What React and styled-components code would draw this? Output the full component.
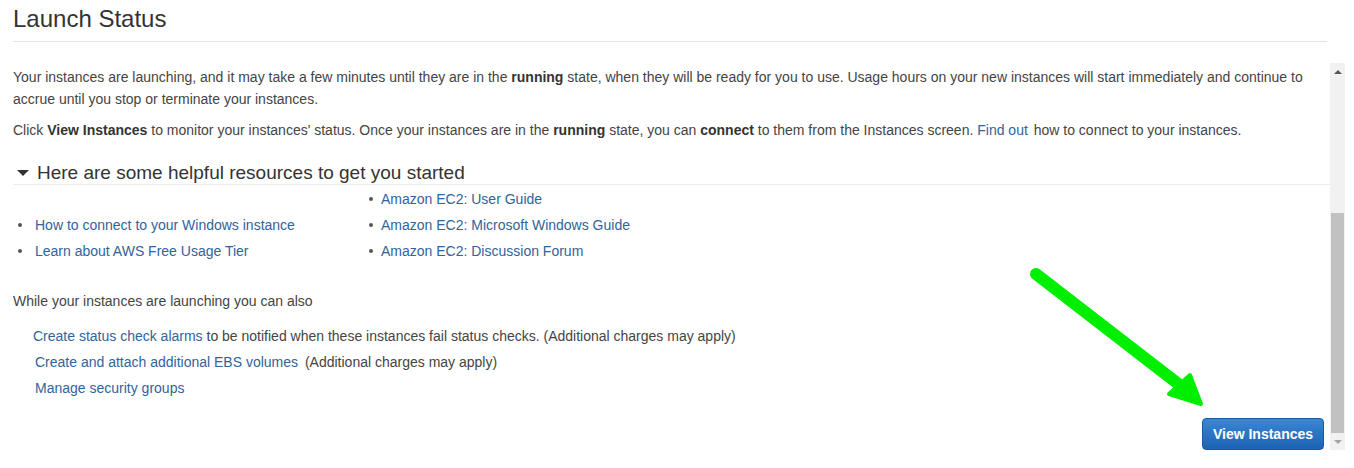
import React from "react";
import styled, { createGlobalStyle } from "styled-components";

const Global = createGlobalStyle`
  html, body { margin: 0; padding: 0; background: #fff; }
  body { font-family: "Liberation Sans", Arial, sans-serif; color: #444; }
`;

const Page = styled.div`
  position: relative;
  width: 1354px;
  height: 468px;
  padding-left: 13px;
  box-sizing: border-box;
  overflow: hidden;
`;

const Title = styled.h1`
  margin: 0 27px 0 0;
  padding: 4px 0 7px;
  font-size: 24px;
  line-height: 30px;
  font-weight: normal;
  color: #333;
  border-bottom: 1px solid #e4e4e4;
`;

const Body = styled.div`
  display: flex;
  margin: 21px 9px 0 0;
`;

const Content = styled.div`
  flex: 1;
  padding-top: 3px;
  font-size: 14px;
  line-height: 22px;
`;

const Para = styled.p`
  margin: 0 16px ${(p) => p.$mb || 0}px 0;
  b { color: #333; font-weight: bold; }
`;

const Link = styled.a`
  color: #30649c;
  text-decoration: none;
  margin-right: ${(p) => p.$mr || 0}px;
  cursor: pointer;
`;

const SectionHead = styled.h2`
  display: flex;
  align-items: center;
  gap: 8px;
  margin: 20px 0 0;
  padding-left: 4px;
  font-size: 19px;
  line-height: 23px;
  font-weight: normal;
  color: #333;
  border-bottom: 1px solid #ececec;
`;

const Caret = styled.span`
  width: 0;
  height: 0;
  border-left: 6px solid transparent;
  border-right: 6px solid transparent;
  border-top: 6px solid #333;
  margin-top: 1px;
`;

const Columns = styled.div`
  display: grid;
  grid-template-columns: 351px auto;
  align-items: end;
  margin-top: 1px;
`;

const List = styled.ul`
  list-style: none;
  margin: 0;
  padding: 0;
`;

const Item = styled.li`
  display: flex;
  align-items: center;
  line-height: 26px;
  padding-left: ${(p) => p.$indent}px;
  gap: ${(p) => p.$gap}px;
  &::before {
    content: "";
    width: 4px;
    height: 4px;
    border-radius: 50%;
    background: #555;
  }
`;

const Also = styled.p`
  margin: 26px 0 11px;
`;

const Actions = styled.div`
  display: flex;
  flex-direction: column;
`;

const ActionRow = styled.div`
  line-height: 26px;
  padding-left: ${(p) => p.$indent}px;
`;

const Footer = styled.div`
  display: flex;
  justify-content: flex-end;
  margin-top: 17px;
  padding-right: 6px;
`;

const Button = styled.button`
  width: 122px;
  height: 32px;
  border: 1px solid #1a5a9e;
  border-radius: 4px;
  background: linear-gradient(#3a86d6, #1d62b2);
  color: #fff;
  font-family: "Liberation Sans", Arial, sans-serif;
  font-size: 14px;
  font-weight: bold;
  cursor: pointer;
  padding: 0;
`;

const Scrollbar = styled.div`
  width: 15px;
  height: 387px;
  background: #f1f1f1;
  display: flex;
  flex-direction: column;
  align-items: center;
  box-sizing: border-box;
`;

const Arrow = styled.div`
  height: 17px;
  display: flex;
  align-items: center;
  justify-content: center;
  &::after {
    content: "";
    border-left: 4px solid transparent;
    border-right: 4px solid transparent;
    ${(p) => (p.$up ? "border-bottom: 4px solid #555;" : "border-top: 4px solid #a3a3a3;")}
  }
`;

const Track = styled.div`
  flex: 1;
  width: 13px;
  display: flex;
  flex-direction: column;
  justify-content: flex-end;
`;

const Thumb = styled.div`
  height: 220px;
  background: #c1c1c1;
`;

const Overlay = styled.svg`
  position: absolute;
  left: 0;
  top: 0;
  pointer-events: none;
`;

export default function App() {
  return (
    <Page>
      <Global />
      <Title>Launch Status</Title>
      <Body>
        <Content>
          <Para $mb={9}>
            Your instances are launching, and it may take a few minutes until they are in the <b>running</b> state, when they will be ready for you to use. Usage hours on your new instances will start immediately and continue to accrue until you stop or terminate your instances.
          </Para>
          <Para>
            Click <b>View Instances</b> to monitor your instances' status. Once your instances are in the <b>running</b> state, you can <b>connect</b> to them from the Instances screen. <Link $mr={2}>Find out</Link> how to connect to your instances.
          </Para>
          <SectionHead>
            <Caret />
            Here are some helpful resources to get you started
          </SectionHead>
          <Columns>
            <List>
              <Item $indent={5} $gap={13}><Link>How to connect to your Windows instance</Link></Item>
              <Item $indent={5} $gap={13}><Link>Learn about AWS Free Usage Tier</Link></Item>
            </List>
            <List>
              <Item $indent={5} $gap={8}><Link>Amazon EC2: User Guide</Link></Item>
              <Item $indent={5} $gap={8}><Link>Amazon EC2: Microsoft Windows Guide</Link></Item>
              <Item $indent={5} $gap={8}><Link>Amazon EC2: Discussion Forum</Link></Item>
            </List>
          </Columns>
          <Also>While your instances are launching you can also</Also>
          <Actions>
            <ActionRow $indent={20}>
              <Link>Create status check alarms</Link> to be notified when these instances fail status checks. (Additional charges may apply)
            </ActionRow>
            <ActionRow $indent={22}>
              <Link $mr={3}>Create and attach additional EBS volumes</Link> (Additional charges may apply)
            </ActionRow>
            <ActionRow $indent={22}>
              <Link>Manage security groups</Link>
            </ActionRow>
          </Actions>
          <Footer>
            <Button>View Instances</Button>
          </Footer>
        </Content>
        <Scrollbar>
          <Arrow $up />
          <Track>
            <Thumb />
          </Track>
          <Arrow />
        </Scrollbar>
      </Body>
      <Overlay width="1354" height="468" viewBox="0 0 1354 468">
        <line x1="1036" y1="274" x2="1181" y2="386" stroke="#00ee00" strokeWidth="12" strokeLinecap="round" />
        <polygon points="1169,394 1190,375 1201,404" fill="#00ee00" stroke="#00ee00" strokeWidth="4" strokeLinejoin="round" />
      </Overlay>
    </Page>
  );
}
